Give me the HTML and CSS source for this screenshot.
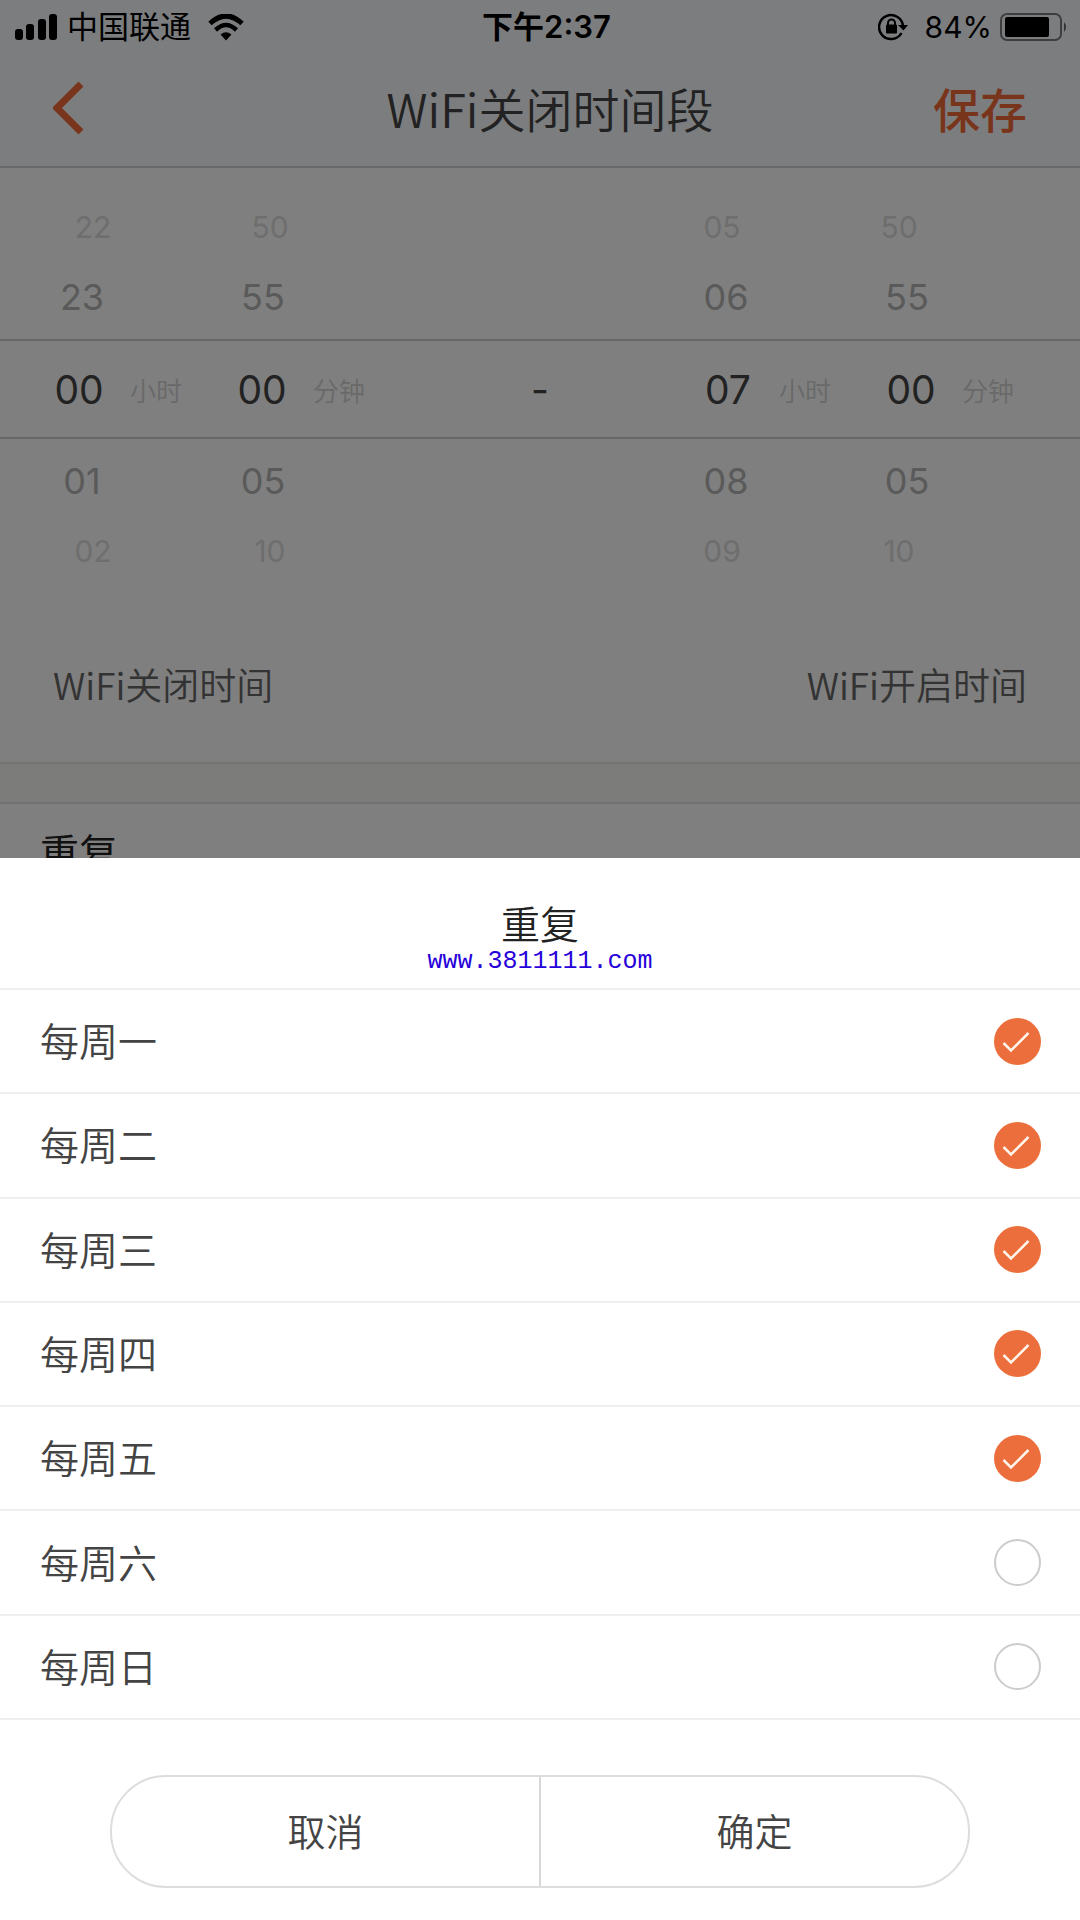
FILE: index.html
```html
<!DOCTYPE html>
<html lang="zh-CN">
	<head>
		<meta charset="utf-8">
		<meta name="viewport" content="width=device-width, initial-scale=1">
		<title>WiFi关闭时间段</title>
		<link rel="stylesheet" href="styles.css">
	</head>
	<body>
		<div class="page">
			<header class="top">
				<div class="statusBar">
					<div class="statusLeft">
						<svg class="signal" width="43" height="27" viewBox="0 0 43 27">
							<rect x="0" y="15" width="8" height="11" rx="3"/>
							<rect x="11" y="10" width="8" height="16" rx="3"/>
							<rect x="23" y="5" width="8" height="21" rx="3"/>
							<rect x="34" y="0" width="8" height="26" rx="3"/>
						</svg>
						<span class="carrier">中国联通</span>
						<svg class="wifi" width="36" height="27" viewBox="0 0 36 27">
							<path d="M2 9.500Q18 -5.500 34 9.500" fill="none" stroke="#000" stroke-width="5"/>
							<path d="M7.500 16Q18 6 28.500 16" fill="none" stroke="#000" stroke-width="4.500"/>
							<path d="M12.500 20.500Q18 16 23.500 20.500L18 26.500Z"/>
						</svg>
					</div>
					<span class="time">下午2:37</span>
					<div class="statusRight">
						<svg class="rotateLock" width="31" height="28" viewBox="0 0 31 28">
							<path d="M23.500 20A12 12 0 1 1 25 13" fill="none" stroke="#000" stroke-width="2.500"/>
							<path d="M20 12H30L25.500 17.500Z"/>
							<rect x="8" y="11.500" width="11" height="9" rx="1"/>
							<path d="M10 13V10A3.500 3.500 0 0 1 17 10V13" fill="none" stroke="#000" stroke-width="2"/>
						</svg>
						<span class="percent">84%</span>
						<svg class="battery" width="68" height="28" viewBox="0 0 68 28">
							<rect x="1" y="1" width="60" height="26" rx="6" fill="none" stroke="#000" stroke-opacity=".5" stroke-width="2"/>
							<rect x="5" y="4" width="44" height="20" rx="2"/>
							<path d="M64 9Q68 14 64 19Z" fill-opacity=".6"/>
						</svg>
					</div>
				</div>
				<div class="navBar">
					<button class="back" type="button" aria-label="返回">
						<svg width="31" height="54" viewBox="0 0 31 54">
							<path d="M28 3L4 27L28 51" fill="none" stroke="#f26a36" stroke-width="7"/>
						</svg>
					</button>
					<h1>WiFi关闭时间段</h1>
					<button class="save" type="button">保存</button>
				</div>
			</header>

			<section class="picker">
				<div class="pickerRow far">
					<span class="h1">22</span><span class="m1">50</span><span class="h2">05</span><span class="m2">50</span>
				</div>
				<div class="pickerRow near">
					<span class="h1">23</span><span class="m1">55</span><span class="h2">06</span><span class="m2">55</span>
				</div>
				<div class="pickerRow selected">
					<span class="h1">00</span><span class="unit">小时</span>
					<span class="m1">00</span><span class="unit">分钟</span>
					<span class="dash">-</span>
					<span class="h2">07</span><span class="unit">小时</span>
					<span class="m2">00</span><span class="unit">分钟</span>
				</div>
				<div class="pickerRow near">
					<span class="h1">01</span><span class="m1">05</span><span class="h2">08</span><span class="m2">05</span>
				</div>
				<div class="pickerRow far">
					<span class="h1">02</span><span class="m1">10</span><span class="h2">09</span><span class="m2">10</span>
				</div>
			</section>
			<div class="pickerLabels">
				<span>WiFi关闭时间</span>
				<span>WiFi开启时间</span>
			</div>
			<div class="divider"></div>
			<div class="repeatRow">重复</div>
		</div>

		<div class="mask"></div>

		<form class="sheet">
			<div class="sheetHeader">
				<h2>重复</h2>
				<a href="#">www.3811111.com</a>
			</div>
			<ul class="days">
				<li><label for="day1">每周一</label><input id="day1" name="day1" type="checkbox" checked></li>
				<li><label for="day2">每周二</label><input id="day2" name="day2" type="checkbox" checked></li>
				<li><label for="day3">每周三</label><input id="day3" name="day3" type="checkbox" checked></li>
				<li><label for="day4">每周四</label><input id="day4" name="day4" type="checkbox" checked></li>
				<li><label for="day5">每周五</label><input id="day5" name="day5" type="checkbox" checked></li>
				<li><label for="day6">每周六</label><input id="day6" name="day6" type="checkbox"></li>
				<li><label for="day7">每周日</label><input id="day7" name="day7" type="checkbox"></li>
			</ul>
			<div class="sheetActions">
				<button type="button">取消</button>
				<button type="button">确定</button>
			</div>
		</form>
	</body>
</html>
```

FILE: styles.css
```css
* {
	box-sizing: border-box;
}

body {
	margin: 0;
	background: #ffffff;
	color: #444444;
	font-family: "Noto Sans CJK SC", sans-serif;
	font-weight: 350;
}

h1, h2, ul {
	margin: 0;
	padding: 0;
	font-weight: inherit;
}

button {
	border: 0;
	padding: 0;
	background: none;
	color: inherit;
	font: inherit;
}

svg {
	display: block;
}

.page {
	height: 100vh;
	overflow: hidden;
}

/* status bar and title */
.top {
	background: #f9fbff;
	border-bottom: 2px solid #d2d2d4;
}

.statusBar {
	display: grid;
	grid-template-columns: 1fr auto 1fr;
	align-items: center;
	height: 54px;
	padding: 0 12px 0 15px;
	color: #000000;
	font-family: Inter, "Noto Sans CJK SC", sans-serif;
	font-size: 31px;
	font-weight: 400;
	line-height: 40px;
}

.statusLeft,
.statusRight {
	display: flex;
	align-items: center;
}

.statusRight {
	justify-content: flex-end;
}

.carrier {
	margin: 0 17px 0 9px;
}

.time {
	padding-left: 10px;
	font-weight: 600;
}

.time,
.percent {
	white-space: nowrap;
}

.percent {
	margin: 0 8px 0 16px;
	font-size: 30px;
}

.navBar {
	display: grid;
	grid-template-columns: 1fr auto 1fr;
	align-items: center;
	height: 112px;
	padding: 0 53px 4px;
}

.navBar h1 {
	padding-left: 20px;
	font-size: 47px;
	line-height: 60px;
}

.back {
	justify-self: start;
}

.save {
	justify-self: end;
	color: #f26a36;
	font-size: 47px;
	font-weight: 500;
	line-height: 60px;
}

/* time wheels */
.picker {
	padding-top: 31px;
	font-family: Inter, "Noto Sans CJK SC", sans-serif;
	font-weight: 400;
}

.pickerRow {
	display: grid;
	grid-template-columns: 50px 133px 50px 79px 1fr 50px 133px 50px 79px;
	align-items: center;
	padding: 0 65px 0 54px;
	text-align: center;
}

.h1 {
	grid-column: 1;
}

.m1 {
	grid-column: 3;
}

.h2 {
	grid-column: 6;
}

.m2 {
	grid-column: 8;
}

.far {
	grid-template-columns: 50px 127px 50px 79px 1fr 50px 127px 50px 79px;
	height: 56px;
	padding: 0 77px 0 68px;
	color: #dcdcdc;
	font-size: 30px;
}

.near {
	grid-template-columns: 50px 131px 50px 79px 1fr 50px 131px 50px 79px;
	height: 84px;
	padding: 0 69px 0 57px;
	color: #b4b4b4;
	font-size: 36px;
}

.selected {
	height: 100px;
	border: solid #cfcfcf;
	border-width: 2px 0;
	color: #444444;
	font-size: 39px;
}

.unit {
	padding-left: 26px;
	color: #d2d2d2;
	font-size: 26px;
	font-weight: 350;
	text-align: left;
	white-space: nowrap;
}

.dash {
	padding-left: 11px;
}

.pickerLabels {
	display: flex;
	justify-content: space-between;
	padding: 81px 53px 54px;
	color: #666666;
	font-size: 37px;
	line-height: 48px;
}

.divider {
	height: 42px;
	background: #f8f8f4;
	border: solid #e4e4e4;
	border-width: 2px 0;
}

.repeatRow {
	padding: 20px 40px;
	color: #222222;
	font-size: 39px;
	font-weight: 400;
	line-height: 52px;
}

.mask {
	position: fixed;
	inset: 0;
	background: rgba(0, 0, 0, 0.5);
}

/* bottom sheet */
.sheet {
	position: fixed;
	left: 0;
	right: 0;
	bottom: 0;
	background: #ffffff;
}

.sheetHeader {
	display: flex;
	flex-direction: column;
	align-items: center;
	padding: 43px 0 8px;
	border-bottom: 2px solid #f0f0f0;
}

.sheetHeader h2 {
	color: #222222;
	font-size: 39px;
	line-height: 42px;
}

.sheetHeader a {
	color: #2600d9;
	font-family: "Liberation Mono", monospace;
	font-size: 25px;
	font-weight: 400;
	line-height: 37px;
	text-decoration: none;
}

.days {
	display: grid;
	grid-auto-rows: 1fr;
	min-height: 730px;
	list-style: none;
}

.days li {
	display: flex;
	align-items: center;
	padding: 0 39px 0 40px;
	border-bottom: 2px solid #efefef;
}

.days label {
	flex: 1;
	padding-bottom: 4px;
	font-size: 39px;
	line-height: 52px;
}

.days input {
	appearance: none;
	width: 47px;
	height: 47px;
	margin: 0;
	border: 2px solid #cccccc;
	border-radius: 50%;
}

.days input:checked {
	border: 0;
	background: #ec6e3c url("data:image/svg+xml,%3Csvg xmlns='http://www.w3.org/2000/svg' viewBox='0 0 47 47'%3E%3Cpath d='M9.500 25L17 32.500L34.500 15' fill='none' stroke='%23fff4ea' stroke-width='2.500'/%3E%3C/svg%3E") center / 47px 47px no-repeat;
}

.sheetActions {
	display: flex;
	height: 113px;
	margin: 55px 110px 32px;
	border: 2px solid #dddddd;
	border-radius: 56px;
}

.sheetActions button {
	flex: 1;
	padding-bottom: 4px;
	font-size: 38px;
	line-height: 52px;
}

.sheetActions button + button {
	border-left: 2px solid #d8d8d8;
}
```
